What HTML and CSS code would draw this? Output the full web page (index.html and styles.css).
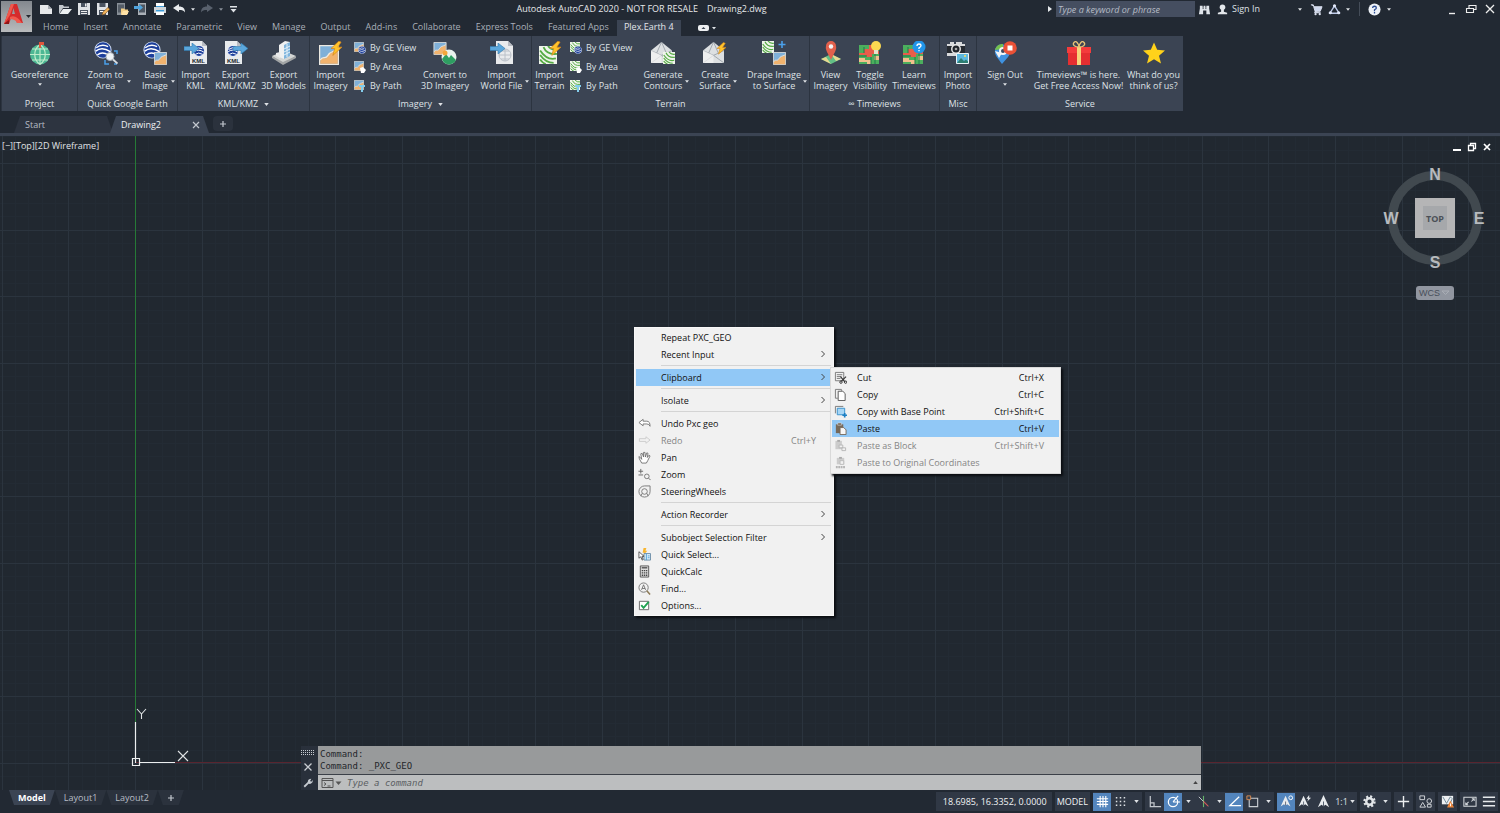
FILE: index.html
```html
<!DOCTYPE html>
<html lang="en">
<head>
<meta charset="utf-8">
<title>Autodesk AutoCAD 2020</title>
<link rel="stylesheet" href="styles.css">
</head>
<body>
<svg class="defs" aria-hidden="true">
  <defs>
    <linearGradient id="logoBg" x1="0" y1="0" x2="0" y2="1"><stop offset="0" stop-color="#83888e"/><stop offset="1" stop-color="#b9bbbd"/></linearGradient>
    <symbol id="caret" viewBox="0 0 6 4"><path d="M0 0h6L3 4z" fill="currentColor"/></symbol>
    <symbol id="chev" viewBox="0 0 6 8"><path d="M1.500 1l3 3-3 3" fill="none" stroke="#444"/></symbol>
    <symbol id="earth" viewBox="0 0 16 16"><circle cx="8" cy="8" r="7.600" fill="#dce8fa"/><circle cx="8" cy="8" r="6.800" fill="#1d3f9b"/><path d="M2 6Q7 2 12.500 5M1.500 9Q7 4.500 14.500 9.500M3 12.500Q7 9 13 12.500" fill="none" stroke="#fff" stroke-width="1.300"/></symbol>
    <symbol id="picture" viewBox="0 0 16 16"><path d="M.5.5h15v15H.500z" fill="#7fb0d8" stroke="#ece9e2"/><path d="M1 12.500c2-4 4 0 6-3.500s4-3 8-5V15H1z" fill="#f1b36e"/><path d="M1 12c2-4 4 0 6-3.500s4-3 8-5" fill="none" stroke="#f6ead9"/></symbol>
    <symbol id="terrain" viewBox="0 0 16 16"><path d="M0 0h16v16H0z" fill="#f0f5ec"/><path d="M1 4q6 9 14 7M1 8q5 7 12 7M1 12q2 3 5 4M4 1q3 7 12 6M8 0q3 4 8 3" fill="none" stroke="#55ab44" stroke-width="1.600"/></symbol>
    <symbol id="bolt" viewBox="0 0 12 16"><path d="M8.500 0L0 8h4L2 15.500 12 6.500H7.500L11 1z" fill="#ffc32b" stroke="#d6861c" stroke-width=".8"/></symbol>
    <symbol id="page" viewBox="0 0 17 23"><path d="M0 0h12l5 5v18H0z" fill="#e9ebed"/><path d="M12 0v5h5z" fill="#b8bcc3"/></symbol>
    <symbol id="arrow" viewBox="0 0 15 11"><path d="M0 3.500h8V0l7 5.500L8 11V7.500H0z" fill="#5ba7dc" stroke="#2f78ad" stroke-width=".6"/></symbol>
    <symbol id="map" viewBox="0 0 20 19"><path d="M0 0h20v19H0z" fill="#4caf5d"/><path d="M0 8h5V4h5V0h5v6h5v3h-7v3H7v-2H0z" fill="#e85d4a"/><path d="M0 13h6v2h6v4H8v-2H0zM15 11h5v4h-5z" fill="#f2c08c"/><path d="M5 2v6M12 12v7M0 11h8M16 0v19" stroke="#1f7b4a" fill="none"/></symbol>
    <symbol id="envelope" viewBox="0 0 22 22"><path d="M0 9L11 0l11 9v13H0z" fill="#dde0e2"/><path d="M0 9l11 5L22 9M0 22l11-8 11 8M11 0L6 11.500M11 0l5 11.500" fill="none" stroke="#8f979f" stroke-width=".8"/><path d="M0 9l11 5v8H0z" fill="#f5f5f5" opacity=".7"/></symbol>
    <symbol id="annoA" viewBox="0 0 16 16"><path d="M8 1l6 13-4-2.500L8 13l-2-1.500L2 14z" fill="#e8ebee"/><path d="M8 8v5" stroke="#4c5768"/></symbol>
    <symbol id="clip" viewBox="0 0 14 14"><path d="M2 2.500h8v9.500H2z" fill="currentColor"/><path d="M4 1h4v2.500H4z" fill="currentColor" stroke="#eee" stroke-width=".5"/><path d="M6.500 6h4l2.500 2.500V13.500H6.500z" fill="#f7f7f7" stroke="currentColor"/></symbol>
  </defs>
</svg>

<header class="titlebar">
  <button class="app-btn" aria-label="Application menu">
    <svg viewBox="0 0 31 31"><path d="M0 0h31v31H0z" fill="url(#logoBg)"/><path d="M3 23L10 3h6l6 19h-6l-1.500-5H10l-2 6zM11 13h3l-1.600-6z" fill="#d52b2c"/><path d="M3 23l7-20h3L9 14zM9 16c4-2 8 0 12 6h-5c-1-3-4-4-7-4z" fill="#f05a4e"/><path d="M3 23l5-4v4z" fill="#8c1516"/><path d="M25 14h5l-2.500 3z" fill="#24282e"/></svg>
  </button>
  <div class="head-rows">
    <div class="head-top">
      <nav class="quick" aria-label="Quick access">
        <button aria-label="New"><svg viewBox="0 0 14 14"><path d="M1 3h8l4 4v5H1z" fill="#e6e8ea"/><path d="M9 3v4h4z" fill="#a6abb2"/></svg></button>
        <button aria-label="Open"><svg viewBox="0 0 14 14"><path d="M1 12V3h4l1 1.500h5V6H5z" fill="#c3c8cd"/><path d="M5 7h9l-4 5H1.500z" fill="#eceff1"/></svg></button>
        <button aria-label="Save"><svg viewBox="0 0 14 14"><path d="M1 1h12v12H1z" fill="#dfe2e5"/><path d="M4 1h6v4H4zM3 8h8v5H3z" fill="#4a5360"/><path d="M8 1.500h1.500v3H8zM4 9h6v1H4zM4 11h6v1H4z" fill="#eee"/></svg></button>
        <button aria-label="Save as"><svg viewBox="0 0 14 14"><path d="M1 1h11v12H1z" fill="#dfe2e5"/><path d="M3.500 1h6v4h-6zM3 8h7v5H3z" fill="#4a5360"/><path d="M4 9h4v1H4z" fill="#fff"/><path d="M6 13l1-3 5-4.500 1.700 1.700L9 12z" fill="#f0b45c" stroke="#7a4a1b" stroke-width=".6"/></svg></button>
        <button aria-label="Open from web"><svg viewBox="0 0 14 14"><path d="M2 1h8v12H2z" fill="#888f97"/><path d="M3 2.500h6v8H3z" fill="#555d67"/><path d="M6 12V6.500h3l1 1h3V12z" fill="#f2cf87"/><path d="M8 9h6l-2 4H6z" fill="#ffe3a8"/></svg></button>
        <button aria-label="Save to web"><svg viewBox="0 0 14 14"><path d="M4 1h8v12H4z" fill="#aab0b7"/><path d="M5 2.500h6v8H5z" fill="#4e5762"/><path d="M0 4h5V2l4 3.500L5 9V7H0z" fill="#4fa3dc"/></svg></button>
        <button aria-label="Plot"><svg viewBox="0 0 14 14"><path d="M3 1h8v4H3z" fill="#fff"/><path d="M1 5h12v6H1z" fill="#cfd5da"/><path d="M3 8h8v5H3z" fill="#fff"/><path d="M3 8h8v1.500H3zM3 4h8v1H3z" fill="#3d9bd8"/></svg></button>
        <button aria-label="Undo"><svg viewBox="0 0 14 14"><path d="M1 6l6-4v2.500c4 0 6 2 6 6C12 8.500 10 8 7 8v2z" fill="#e9ecef"/></svg></button>
        <button class="thin" aria-label="Undo list"><svg class="caret"><use href="#caret"/></svg></button>
        <button aria-label="Redo"><svg viewBox="0 0 14 14"><path d="M13 6L7 2v2.500c-4 0-6 2-6 6C2 8.500 4 8 7 8v2z" fill="#59616d"/></svg></button>
        <button class="thin dim" aria-label="Redo list"><svg class="caret"><use href="#caret"/></svg></button>
        <button class="custom" aria-label="Customize"><svg viewBox="0 0 14 14"><path d="M4 4h7v1.500H4zM4.500 7h6l-3 3.500z" fill="#dfe3e7"/></svg></button>
      </nav>
      <h1 class="title">Autodesk AutoCAD 2020 - NOT FOR RESALE<span>Drawing2.dwg</span></h1>
      <div class="account">
        <svg class="tri" viewBox="0 0 4 6"><path d="M0 0l4 3-4 3z" fill="#e6e9ec"/></svg>
        <input class="search" type="text" placeholder="Type a keyword or phrase" aria-label="Search">
        <button aria-label="Find"><svg viewBox="0 0 14 14"><path d="M2 3h3v2h1V3h2v2h1V3h3v3l1 6H9V8H5.500v4H1l1-6z" fill="#dfe4ea"/><path d="M5 6h1M8 6h1" stroke="#222933"/></svg></button>
        <button class="sign"><svg viewBox="0 0 14 14"><circle cx="7" cy="4.500" r="3" fill="#e3e6ea"/><path d="M5.500 6h3v3.500l3.500 1V12H2v-1.500l3.500-1z" fill="#e3e6ea"/></svg>Sign In</button>
        <button class="thin" aria-label="Account list"><svg class="caret"><use href="#caret"/></svg></button>
        <button class="cart" aria-label="Store"><svg viewBox="0 0 14 14"><path d="M1 2h2.500l.8 2H13l-2 5H5.500L4 4M5.500 9L5 10.500h6.500" fill="#cfd8ee" stroke="#dfe4f3"/><circle cx="6" cy="12" r="1.200" fill="#dfe4f3"/><circle cx="10.500" cy="12" r="1.200" fill="#dfe4f3"/></svg></button>
        <button class="apps" aria-label="Autodesk apps"><svg viewBox="0 0 14 14"><path d="M7 3L2 11h10z" fill="none" stroke="#bfcbea" stroke-width="1.500"/><circle cx="7" cy="3" r="1.700" fill="#e0e7f8"/><circle cx="2.500" cy="10.500" r="1.700" fill="#e0e7f8"/><circle cx="11.500" cy="10.500" r="1.700" fill="#e0e7f8"/></svg></button>
        <button class="thin" aria-label="Apps list"><svg class="caret"><use href="#caret"/></svg></button>
        <i class="vr"></i>
        <button class="help" aria-label="Help"><svg viewBox="0 0 14 14"><circle cx="7" cy="7" r="6.500" fill="#eef2f8"/><path d="M5 5.500q0-2 2-2t2 1.800q0 1-2 2v1.500M7 9.800v1.400" fill="none" stroke="#2c4d92" stroke-width="1.400"/></svg></button>
        <button class="thin" aria-label="Help list"><svg class="caret"><use href="#caret"/></svg></button>
      </div>
      <div class="winctl">
        <button aria-label="Minimize"><svg viewBox="0 0 14 14"><path d="M4 11.500h6" stroke="#eee" stroke-width="1.400"/></svg></button>
        <button aria-label="Restore"><svg viewBox="0 0 14 14"><path d="M2.500 6.500h7v4h-7zM5 6.500v-3h7v4H9.500" fill="none" stroke="#eee" stroke-width="1.100"/></svg></button>
        <button aria-label="Close"><svg viewBox="0 0 14 14"><path d="M3 3l8 8M11 3l-8 8" stroke="#eee" stroke-width="1.300"/></svg></button>
      </div>
    </div>
    <nav class="tabs" aria-label="Ribbon tabs">
      <button>Home</button><button>Insert</button><button>Annotate</button><button>Parametric</button><button>View</button><button>Manage</button><button>Output</button><button>Add-ins</button><button>Collaborate</button><button>Express Tools</button><button>Featured Apps</button><button class="on">Plex.Earth 4</button>
      <button class="mini" aria-label="Minimize ribbon"><svg viewBox="0 0 20 8"><rect x="0" y="1" width="11" height="6" rx="2" fill="#eef0f2"/><path d="M3.500 5h4l-2-2z" fill="#39424f"/><path d="M14 3h4l-2 2.500z" fill="#dfe3e7"/></svg></button>
    </nav>
  </div>
</header>

<section class="ribbon" aria-label="Ribbon">
  <div class="panel p-project">
    <div class="tools">
      <button class="tool"><svg viewBox="0 0 24 24"><circle cx="12" cy="13.500" r="10" fill="#4db894"/><path d="M12 3.500v20M2 13.500h20M4 8h16M4 19h16M12 3.500c-7 5-7 15 0 20M12 3.500c7 5 7 15 0 20" fill="none" stroke="#bfeccb" stroke-width="1.200"/><path d="M11 1h5v3h-3v3h-2z" fill="#e0583c"/></svg>Georeference<svg class="caret below"><use href="#caret"/></svg></button>
    </div>
    <h2>Project</h2>
  </div>
  <div class="panel p-earth">
    <div class="tools">
      <button class="tool"><svg viewBox="0 0 24 24"><use href="#earth" x="0" y="0" width="18" height="18"/><path d="M20 10h3v3M11 19v4h4M20 23h3" fill="none" stroke="#4ba0ea" stroke-width="1.500"/><circle cx="16" cy="15.500" r="4" fill="#eef3f6" stroke="#a7afb6"/><path d="M19 18.500l4.500 4" stroke="#d9dde0" stroke-width="1.800"/></svg>Zoom to<br>Area<svg class="caret side"><use href="#caret"/></svg></button>
      <button class="tool"><svg viewBox="0 0 24 24"><use href="#earth" x="0" y="0" width="18" height="18"/><use href="#picture" x="11" y="11" width="13" height="13"/></svg>Basic<br>Image<svg class="caret side"><use href="#caret"/></svg></button>
    </div>
    <h2>Quick Google Earth</h2>
  </div>
  <div class="panel p-kml">
    <div class="tools">
      <button class="tool"><svg viewBox="0 0 24 24"><use href="#page" x="6" y="0" width="17" height="23"/><use href="#earth" x="9" y="4" width="12" height="12"/><use href="#arrow" x="0" y="2" width="15" height="11"/><text class="kml" x="14.500" y="22">KML</text></svg>Import<br>KML</button>
      <button class="tool"><svg viewBox="0 0 24 24"><use href="#page" x="1" y="0" width="17" height="23"/><use href="#earth" x="3" y="4" width="12" height="12"/><use href="#arrow" x="9" y="2" width="15" height="11"/><text class="kml" x="9.500" y="22">KML</text></svg>Export<br>KML/KMZ</button>
      <button class="tool"><svg viewBox="0 0 24 24"><path d="M0 15l12-5 12 5-13 8z" fill="#d4d6d4"/><path d="M0 15l11 6 13-6v2l-13 7L0 17z" fill="#a2a5a6"/><path d="M7 4l6-4 5 1v14l-6 3-5-2z" fill="#f0f1f1"/><path d="M12 4l6-3v14l-6 3z" fill="#7fb4dc"/><path d="M12 8l6-3M12 11l6-3M12 14l6-3M15 3v13" stroke="#e4f0f8"/><path d="M4 12l4-1v6l-4-2z" fill="#e9eaea"/></svg>Export<br>3D Models</button>
    </div>
    <h2>KML/KMZ<svg class="caret"><use href="#caret"/></svg></h2>
  </div>
  <div class="panel p-imagery">
    <div class="tools">
      <button class="tool"><svg viewBox="0 0 24 24"><use href="#picture" x="0" y="4" width="20" height="20"/><use href="#bolt" x="12" y="0" width="11" height="15"/></svg>Import<br>Imagery</button>
      <div class="stack">
        <button><svg viewBox="0 0 12 12"><use href="#picture" width="10" height="10"/><use href="#earth" x="4" y="4" width="8" height="8"/></svg>By GE View</button>
        <button><svg viewBox="0 0 12 12"><use href="#picture" width="10" height="10"/><path d="M6 7l3-1 3 3-2 3H7z" fill="#fff"/></svg>By Area</button>
        <button><svg viewBox="0 0 12 12"><use href="#picture" width="10" height="10"/><path d="M5 5h6v2H9v5H7V7H5z" fill="#83cdec"/></svg>By Path</button>
      </div>
      <button class="tool"><svg viewBox="0 0 24 24"><use href="#picture" x="0" y="1" width="14" height="13"/><circle cx="16" cy="16" r="7.500" fill="#e9f2ee"/><path d="M9 18l4-5 3 4 2-3 5 5c-2 5-11 7-14-1z" fill="#2e9e62"/><circle cx="12" cy="12" r="2.500" fill="#f3a73c"/></svg>Convert to<br>3D Imagery</button>
      <button class="tool"><svg viewBox="0 0 24 24"><use href="#page" x="6" y="0" width="17" height="23"/><circle cx="15" cy="14" r="6" fill="none" stroke="#bac0c8"/><path d="M9 14h12M15 8v12M11 10h8M11 18h8" stroke="#bac0c8"/><use href="#arrow" x="0" y="2" width="15" height="11"/></svg>Import<br>World File<svg class="caret side"><use href="#caret"/></svg></button>
    </div>
    <h2>Imagery<svg class="caret"><use href="#caret"/></svg></h2>
  </div>
  <div class="panel p-terrain">
    <div class="tools">
      <button class="tool"><svg viewBox="0 0 24 24"><use href="#terrain" x="1" y="5" width="18" height="18"/><use href="#bolt" x="12" y="0" width="11" height="15"/></svg>Import<br>Terrain</button>
      <div class="stack">
        <button><svg viewBox="0 0 12 12"><use href="#terrain" width="10" height="10"/><use href="#earth" x="4" y="4" width="8" height="8"/></svg>By GE View</button>
        <button><svg viewBox="0 0 12 12"><use href="#terrain" width="10" height="10"/><path d="M6 7l3-1 3 3-2 3H7z" fill="#fff"/></svg>By Area</button>
        <button><svg viewBox="0 0 12 12"><use href="#terrain" width="10" height="10"/><path d="M5 5h6v2H9v5H7V7H5z" fill="#83cdec"/></svg>By Path</button>
      </div>
      <button class="tool"><svg viewBox="0 0 24 24"><use href="#envelope" x="0" y="1" width="21" height="21"/><use href="#terrain" x="12" y="11" width="12" height="12"/></svg>Generate<br>Contours<svg class="caret side"><use href="#caret"/></svg></button>
      <button class="tool"><svg viewBox="0 0 24 24"><use href="#envelope" x="0" y="1" width="21" height="21"/><use href="#bolt" x="14" y="1" width="9" height="13"/></svg>Create<br>Surface<svg class="caret side"><use href="#caret"/></svg></button>
      <button class="tool"><svg viewBox="0 0 24 24"><use href="#terrain" x="0" y="0" width="12" height="12"/><use href="#picture" x="11" y="11" width="13" height="13"/><path d="M20 0v7M16.500 3.500h7" stroke="#4ba0ea" stroke-width="1.600"/></svg>Drape Image<br>to Surface<svg class="caret side"><use href="#caret"/></svg></button>
    </div>
    <h2>Terrain</h2>
  </div>
  <div class="panel p-time">
    <div class="tools">
      <button class="tool"><svg viewBox="0 0 24 24"><path d="M2 18l10-5 10 5-10 5z" fill="#62c086"/><path d="M2 18l5-2 5 7zM12 13l5 7 5-2z" fill="#e7d890"/><path d="M12 19C9 12 6 9 7 5a5 5 0 0110 0c1 4-2 7-5 14z" fill="#e2604c"/><circle cx="12" cy="5.500" r="2.200" fill="#f5f5f5"/></svg>View<br>Imagery</button>
      <button class="tool"><svg viewBox="0 0 24 24"><use href="#map" x="1" y="4" width="20" height="19"/><circle cx="18" cy="5" r="5" fill="#fbd951"/><path d="M16 9h4v4h-4z" fill="#e8e2cb"/></svg>Toggle<br>Visibility</button>
      <button class="tool"><svg viewBox="0 0 24 24"><use href="#map" x="1" y="4" width="20" height="19"/><circle cx="17" cy="6" r="6.500" fill="#2195e9"/><path d="M15 5q0-2 2-2t2 1.800q0 1-2 2v1.200M17 9v1.300" fill="none" stroke="#fff" stroke-width="1.300"/></svg>Learn<br>Timeviews</button>
    </div>
    <h2>∞ Timeviews</h2>
  </div>
  <div class="panel p-misc">
    <div class="tools">
      <button class="tool"><svg viewBox="0 0 24 24"><path d="M1 3h3V1h4v2h2V1h6v2h3v12H1z" fill="#d9dadc"/><path d="M1 5h18v7H1z" fill="#262a30"/><circle cx="10" cy="8" r="5" fill="#e4e4e4"/><circle cx="10" cy="8" r="3.500" fill="#20242a"/><circle cx="10" cy="8" r="1.300" fill="#aaa"/><path d="M10.500 12.500h12v10h-12z" fill="#5db8df" stroke="#eaf3f6"/><path d="M11 22l4-5 3 3 2-1.500 2 2V22z" fill="#2d7e72"/><circle cx="19" cy="15" r="1" fill="#ffe05d"/></svg>Import<br>Photo</button>
    </div>
    <h2>Misc</h2>
  </div>
  <div class="panel p-service">
    <div class="tools">
      <button class="tool"><svg viewBox="0 0 24 24"><path d="M9 23C5 17 1 14 2 9c1-4 4-6 8-6l7 7c1 4-4 8-8 13z" fill="#3f92e0"/><path d="M2 9c1-4 4-6 8-6v5z" fill="#76c14b"/><path d="M2 10l4 7 3-5z" fill="#f2f4f6"/><circle cx="10" cy="10" r="4" fill="#f5f7f8"/><circle cx="10" cy="10" r="2" fill="#3d4a60"/><circle cx="17" cy="7" r="6.800" fill="#ea5136"/><path d="M14.500 4.500h5v5h-5z" fill="#fff"/></svg>Sign Out<svg class="caret below"><use href="#caret"/></svg></button>
      <button class="tool"><svg viewBox="0 0 24 24"><path d="M1 12h22v12H1z" fill="#e52f31"/><path d="M0 6h24v6H0z" fill="#f43c3c"/><path d="M10 6h4v18h-4z" fill="#f7d37b"/><path d="M12 6C8 6 5 4 7 1.500S12 3 12 6c0-3 3-7 5-4.500S16 6 12 6z" fill="none" stroke="#e9c576" stroke-width="1.300"/></svg>Timeviews™ is here.<br>Get Free Access Now!</button>
      <button class="tool"><svg viewBox="0 0 24 24"><path d="M12 1.500l3.200 7.300 7.800.7-6 5.200 2 7.800-7-4.200-7 4.200 2-7.800-6-5.200 7.800-.7z" fill="#ffd21a"/></svg>What do you<br>think of us?</button>
    </div>
    <h2>Service</h2>
  </div>
</section>

<nav class="docs" aria-label="Drawings">
  <div class="doc">Start</div>
  <div class="doc on"><span>Drawing2</span><button aria-label="Close drawing"><svg viewBox="0 0 8 8"><path d="M1 1l6 6M7 1L1 7" stroke="#c3c8cf" stroke-width="1.200"/></svg></button></div>
  <button class="add" aria-label="New drawing"><svg viewBox="0 0 8 8"><path d="M4 1v6M1 4h6" stroke="#c3c8cf" stroke-width="1.200"/></svg></button>
</nav>

<main class="canvas">
  <svg class="grid" aria-hidden="true">
    <defs>
      <pattern id="g" x="135" y="27" width="200" height="200" patternUnits="userSpaceOnUse">
        <path d="M13.500 0v200M27.500 0v200M40.500 0v200M53.500 0v200M80.500 0v200M93.500 0v200M107.500 0v200M120.500 0v200M147.500 0v200M160.500 0v200M173.500 0v200M187.500 0v200M0 13.500h200M0 27.500h200M0 40.500h200M0 53.500h200M0 80.500h200M0 93.500h200M0 107.500h200M0 120.500h200M0 147.500h200M0 160.500h200M0 173.500h200M0 187.500h200" stroke="#232b34" fill="none"/>
        <path d="M.5 0v200M67.500 0v200M133.500 0v200M0 .5h200M0 67.500h200M0 133.500h200" stroke="#2b343e" fill="none"/>
      </pattern>
    </defs>
    <rect width="100%" height="100%" fill="url(#g)"/>
  </svg>
  <i class="axis-y"></i><i class="axis-x"></i>
  <svg class="ucs" viewBox="0 0 60 62" aria-label="UCS icon"><path d="M4.500 56V15M9 55.500h35M1.500 51.500h7v7h-7z" fill="none" stroke="#eceeef" stroke-width="1.200"/><path d="M6 2l4.500 5L15 2M10.500 7v5M47 44l10 10M57 44L47 54" fill="none" stroke="#dfe2e4" stroke-width="1.100"/></svg>

  <div class="view-label">[−][Top][2D Wireframe]</div>
  <div class="view-ctl">
    <button aria-label="Minimize view"><svg viewBox="0 0 10 10"><path d="M1 8h8" stroke="#fff" stroke-width="2"/></svg></button>
    <button aria-label="Restore view"><svg viewBox="0 0 10 10"><path d="M1.500 3.500h5v5h-5zM3.500 3V1.500h5v5H7" fill="none" stroke="#fff" stroke-width="1.300"/></svg></button>
    <button aria-label="Close view"><svg viewBox="0 0 10 10"><path d="M2 2l6 6M8 2L2 8" stroke="#fff" stroke-width="1.700"/></svg></button>
  </div>
  <div class="cube">
    <svg viewBox="0 0 104 104">
      <circle cx="52" cy="52" r="42.500" fill="none" stroke="#41494f" stroke-width="9"/>
      <path d="M32 32h40v40H32z" fill="#b5b5b6"/><path d="M40 40h24v24H40z" fill="#a6a8ab"/>
      <text class="face" x="52" y="56">TOP</text>
      <text class="dir" x="52" y="14">N</text><text class="dir" x="52" y="102">S</text><text class="dir" x="8" y="58">W</text><text class="dir" x="96" y="58">E</text>
    </svg>
    <button class="wcs">WCS<svg viewBox="0 0 8 6"><path d="M0 1h7L3.500 4.500z" fill="none" stroke="#a9adb5"/></svg></button>
  </div>

  <div class="menu ctx" role="menu">
    <button>Repeat PXC_GEO</button>
    <button>Recent Input<svg class="chev"><use href="#chev"/></svg></button>
    <hr>
    <button class="hot">Clipboard<svg class="chev"><use href="#chev"/></svg></button>
    <hr>
    <button>Isolate<svg class="chev"><use href="#chev"/></svg></button>
    <hr>
    <button><svg class="ico" viewBox="0 0 14 14"><path d="M1 6L5.500 2.500v2h4q3.500 0 3.500 5.500-1-2.500-3.500-2.500h-4v2z" fill="#fff" stroke="#777"/></svg>Undo Pxc geo</button>
    <button class="off" disabled><svg class="ico" viewBox="0 0 14 14"><path d="M13 6.500L8.500 3v2H1.500v3h7v2z" fill="none" stroke="#ccc"/></svg>Redo<kbd>Ctrl+Y</kbd></button>
    <button><svg class="ico" viewBox="0 0 14 14"><path d="M4 13L1.500 8.500 1 6l1.500 1L4 9 3 3l1.500-.5L6 6.500V1.500h1.500l.5 5 1.500-4.500 1.300.5L10 7l2-2.500 1 .8-2.500 5L9 13z" fill="#fff" stroke="#666" stroke-width=".9"/></svg>Pan</button>
    <button><svg class="ico" viewBox="0 0 14 14"><path d="M3 1v5M.5 3.500h5M.5 7.500h5" stroke="#666" fill="none"/><circle cx="9.500" cy="9" r="2.500" fill="none" stroke="#777"/><path d="M11.500 11l2 2" stroke="#666"/></svg>Zoom</button>
    <button><svg class="ico" viewBox="0 0 14 14"><path d="M7 1h6v6a6 6 0 11-6-6z" fill="none" stroke="#777"/><circle cx="7" cy="7" r="3" fill="none" stroke="#777"/><path d="M4.500 9L3 12M9.500 9L11 12" stroke="#777"/></svg>SteeringWheels</button>
    <hr>
    <button>Action Recorder<svg class="chev"><use href="#chev"/></svg></button>
    <hr>
    <button>Subobject Selection Filter<svg class="chev"><use href="#chev"/></svg></button>
    <button><svg class="ico" viewBox="0 0 14 14"><path d="M6 0L5 5h2L5 9l5-6H8l1-3z" fill="#f9b52d"/><path d="M6.500 6h7v7h-7z" fill="#dbeefa" stroke="#6a8ba5"/><path d="M9 6v7M10.500 8.500h2M10.500 10.500h2" stroke="#4f9fd6"/><path d="M1 4v7l2-1.500L4.500 13l1-.5L4.300 9H6.500z" fill="#fff" stroke="#333" stroke-width=".8"/></svg>Quick Select...</button>
    <button><svg class="ico" viewBox="0 0 14 14"><path d="M2.500 1h9v12h-9z" fill="#ddd" stroke="#555"/><path d="M4 3h6" stroke="#555" stroke-width="1.500"/><path d="M4 6h6M4 8.500h6M4 11h6" stroke="#444" stroke-width="1.500" stroke-dasharray="1.500 .75"/></svg>QuickCalc</button>
    <button><svg class="ico" viewBox="0 0 14 14"><circle cx="6" cy="6" r="5" fill="none" stroke="#777"/><path d="M3.800 8.500L6 3l2.200 5.500M4.500 7h3" fill="none" stroke="#666" stroke-width=".9"/><path d="M9.500 9.500l3.500 4" stroke="#8d7a56" stroke-width="1.600"/></svg>Find...</button>
    <button><svg class="ico" viewBox="0 0 14 14"><path d="M1.500 2.500h10v9h-10z" fill="#fff" stroke="#666"/><path d="M3.500 6.500L6 9.500 11.500 3" fill="none" stroke="#20a352" stroke-width="2"/></svg>Options...</button>
  </div>

  <div class="menu sub" role="menu">
    <button><svg class="ico" viewBox="0 0 14 14"><path d="M1.500 1.500h9v9h-9zM3 4h6M3 6h5M3 8h4" fill="none" stroke="#777"/><path d="M7 6l5 6M13 6l-5 5" stroke="#333" stroke-width="1.200"/><circle cx="7.500" cy="12" r="1.300" fill="none" stroke="#333"/><circle cx="12.500" cy="12" r="1.300" fill="none" stroke="#333"/></svg>Cut<kbd>Ctrl+X</kbd></button>
    <button><svg class="ico" viewBox="0 0 14 14"><path d="M8 3V1.500H1.500V11H4" fill="none" stroke="#777"/><path d="M4.500 3.500h5L12 6v7.500H4.500z" fill="#fff" stroke="#555"/></svg>Copy<kbd>Ctrl+C</kbd></button>
    <button><svg class="ico" viewBox="0 0 14 14"><path d="M1.500 9V1.500H10" fill="none" stroke="#777"/><path d="M3.500 3.500h8v7h-8z" fill="#a8d6f5" stroke="#368fcb"/><path d="M11.500 8.500v5M9 11h5" stroke="#1b7fc4" stroke-width="1.800"/></svg>Copy with Base Point<kbd>Ctrl+Shift+C</kbd></button>
    <button class="hot"><svg class="ico paste"><use href="#clip"/></svg>Paste<kbd>Ctrl+V</kbd></button>
    <button class="off" disabled><svg class="ico" viewBox="0 0 14 14"><path d="M1.500 2h7v9h-7z" fill="#ccc"/><path d="M3.500 1h3v2h-3z" fill="#aaa"/><path d="M5.500 6.500h4v3h-4zM8.500 9.500h4v3h-4z" fill="#f1f1f1" stroke="#b5b5b5"/></svg>Paste as Block<kbd>Ctrl+Shift+V</kbd></button>
    <button class="off" disabled><svg class="ico" viewBox="0 0 14 14"><path d="M3 2h8v7H3z" fill="#ccc"/><path d="M5.500 1h3v2h-3z" fill="#aaa"/><path d="M6.500 5h4v4h-4z" fill="#f1f1f1" stroke="#bbb"/><path d="M2 12h10" stroke="#b5b5b5" stroke-width="2.500" stroke-dasharray="2 .6"/></svg>Paste to Original Coordinates</button>
  </div>

  <div class="cmd">
    <div class="cmd-side">
      <svg class="grip" viewBox="0 0 14 5"><path d="M0 .5h14M0 2.500h14M0 4.500h14" stroke="#c5cad0" stroke-dasharray="1 1"/></svg>
      <button aria-label="Close command line"><svg viewBox="0 0 10 10"><path d="M1.500 1.500l7 7M8.500 1.500l-7 7" stroke="#c9cdd2" stroke-width="1.300"/></svg></button>
      <button aria-label="Customize command line"><svg viewBox="0 0 12 12"><path d="M1.500 10.500l5-5" stroke="#c5cad0" stroke-width="2.200"/><path d="M6 6c-1-3 1-5 4-5L8.500 3.500 10 4.500 11.500 2.500c1 3-2 5-4.500 4.500z" fill="#c5cad0"/></svg></button>
    </div>
    <div class="cmd-main">
      <div class="history"><p>Command:</p><p>Command: _PXC_GEO</p></div>
      <div class="entry">
        <svg class="prompt" viewBox="0 0 20 10"><path d="M.5.5h11v9H.500zM.5 2.500h11M2.500 4.500l2 1.500-2 1.500M6 8h3" fill="none" stroke="#555"/><path d="M14 3.500h6l-3 3.500z" fill="#555"/></svg>
        <input type="text" placeholder="Type a command" aria-label="Command">
        <svg class="up" viewBox="0 0 6 4"><path d="M0 4h6L3 0z" fill="#444"/></svg>
      </div>
    </div>
  </div>
</main>

<footer class="status">
  <nav class="layouts" aria-label="Layouts">
    <button class="on">Model</button><button>Layout1</button><button>Layout2</button><button aria-label="New layout"><svg viewBox="0 0 8 8"><path d="M4 1v6M1 4h6" stroke="#c3c8cf" stroke-width="1.200"/></svg></button>
  </nav>
  <div class="tray">
    <span class="coords">18.6985, 16.3352, 0.0000</span>
    <button class="word">MODEL</button>
    <div class="set">
      <button class="lit" aria-label="Grid"><svg viewBox="0 0 16 16"><path d="M5.500 2v12M8.500 2v12M11.500 2v12M2 5h12M2 8h12M2 11h12" stroke="#fff" stroke-width="1.200"/></svg></button>
      <button aria-label="Snap"><svg viewBox="0 0 16 16"><path d="M3 4h11M3 8h11M3 12h11" stroke="#dde1e5" stroke-width="1.600" stroke-dasharray="1.600 2.600"/></svg></button>
      <button class="thin" aria-label="Snap list"><svg class="caret"><use href="#caret"/></svg></button>
    </div>
    <div class="set">
      <button aria-label="Ortho"><svg viewBox="0 0 16 16"><path d="M3.500 2v11.500H15M3.500 9.500h4v4" fill="none" stroke="#c3c8ce" stroke-width="1.300"/></svg></button>
      <button class="lit" aria-label="Polar"><svg viewBox="0 0 16 16"><circle cx="7.500" cy="8.500" r="5" fill="none" stroke="#fff" stroke-width="1.300"/><path d="M7.500 8.500L13 2M7.500 8.500H15" stroke="#fff" stroke-width="1.200"/></svg></button>
      <button class="thin" aria-label="Polar list"><svg class="caret"><use href="#caret"/></svg></button>
      <button aria-label="Isodraft"><svg viewBox="0 0 16 16"><path d="M8 2v12" stroke="#64b36c" stroke-width="1.200"/><path d="M3 3l10 10" stroke="#c9cdd2"/><path d="M8 8l5 5" stroke="#c95555" stroke-width="1.200"/></svg></button>
      <button class="thin" aria-label="Isodraft list"><svg class="caret"><use href="#caret"/></svg></button>
      <button class="lit" aria-label="Object snap tracking"><svg viewBox="0 0 16 16"><path d="M13 3L3 12.500h12" fill="none" stroke="#fff" stroke-width="1.300"/></svg></button>
      <button aria-label="Object snap"><svg viewBox="0 0 16 16"><path d="M4.500 4.500h9v9h-9z" fill="none" stroke="#c9cdd2" stroke-width="1.200"/><path d="M2 2h4v4H2z" fill="#39424f" stroke="#d78b52"/></svg></button>
      <button class="thin" aria-label="Object snap list"><svg class="caret"><use href="#caret"/></svg></button>
    </div>
    <div class="set">
      <button class="lit" aria-label="Annotation visibility"><svg viewBox="0 0 16 16"><use href="#annoA" width="14" height="16"/><circle cx="12.500" cy="4" r="2" fill="none" stroke="#fff"/></svg></button>
      <button aria-label="Auto scale"><svg viewBox="0 0 16 16"><use href="#annoA" width="14" height="16"/><path d="M13 1l-3 4h2l-1 3 4-4h-2z" fill="#e8ebee"/></svg></button>
      <button aria-label="Annotation scale"><svg viewBox="0 0 16 16"><use href="#annoA" width="16" height="16"/></svg></button>
      <button class="scale">1:1<svg class="caret"><use href="#caret"/></svg></button>
    </div>
    <div class="set">
      <button aria-label="Workspace"><svg viewBox="0 0 16 16"><circle cx="8" cy="8" r="5.400" fill="none" stroke="#e3e6e9" stroke-width="2.400" stroke-dasharray="2.200 2.040"/><circle cx="8" cy="8" r="3.500" fill="none" stroke="#e3e6e9" stroke-width="2.600"/></svg></button>
      <button class="thin" aria-label="Workspace list"><svg class="caret"><use href="#caret"/></svg></button>
    </div>
    <div class="set"><button aria-label="Annotation monitor"><svg viewBox="0 0 16 16"><path d="M8 2v12M2 8h12" stroke="#eceef0" stroke-width="1.500"/></svg></button></div>
    <div class="set"><button aria-label="Isolate objects"><svg viewBox="0 0 16 16"><path d="M2 2h5v4H2zM5 9l-3 5h6z" fill="none" stroke="#d5d9dd"/><circle cx="12" cy="7.500" r="2.500" fill="none" stroke="#d5d9dd"/><path d="M10 11h4v3h-4z" fill="none" stroke="#d5d9dd"/></svg></button></div>
    <div class="set"><button aria-label="Graphics performance"><svg viewBox="0 0 16 16"><path d="M2 2h12v9H2z" fill="#eef0f2"/><path d="M3 3l4 7 4-7 2 2-2 5" fill="none" stroke="#6d8898"/><path d="M11 7l4 7.500H7.500z" fill="#e8833a"/><path d="M11.200 10v3" stroke="#fff"/></svg></button></div>
    <div class="set">
      <button aria-label="Clean screen"><svg viewBox="0 0 16 16"><path d="M2 3.500h13v9.500H2zM4 11.500l3-3M13 5l-3 3M10.500 5H13v2.500M4 9v2.500h2.500" fill="none" stroke="#d5d9dd" stroke-width="1.100"/></svg></button>
      <button aria-label="Customization"><svg viewBox="0 0 16 16"><path d="M2 3.500h13M2 8h13M2 12.500h13" stroke="#e6e9ec" stroke-width="1.600"/></svg></button>
    </div>
  </div>
</footer>
</body>
</html>
```
FILE: styles.css
```css
* { box-sizing: border-box; }
body {
  margin: 0;
  min-height: 100vh;
  display: flex;
  flex-direction: column;
  background: #222933;
  color: #dfe2e6;
  font: 9px/12px "Open Sans", "Noto Sans", sans-serif;
}
button {
  margin: 0;
  padding: 0;
  border: 0;
  background: none;
  color: inherit;
  font: inherit;
}
input { border: 0; padding: 0; margin: 0; font: inherit; min-width: 0; }
svg { display: block; flex: none; }
h1, h2, p { margin: 0; font: inherit; }
.defs { position: absolute; width: 0; height: 0; }
.caret { width: 5px; height: 3px; }

/* title bar and ribbon tabs */
.titlebar { display: flex; height: 36px; }
.app-btn { width: 32px; height: 32px; padding: 0 0 0 1px; }
.app-btn svg { width: 31px; height: 31px; }
.head-rows { flex: 1; min-width: 0; display: flex; flex-direction: column; }
.head-top { display: flex; height: 18px; align-items: center; }
.quick { display: flex; align-items: center; width: 33%; padding-left: 4px; }
.quick button { width: 19px; display: flex; justify-content: center; }
.quick button.thin { width: 9px; }
.quick button.dim { color: #8b929c; }
.quick button.custom { width: 16px; }
.quick svg:not(.caret) { width: 14px; height: 14px; }
.quick .caret, .account .caret { width: 4px; height: 3px; }
.title { white-space: nowrap; color: #e6e8ea; }
.title span { margin-left: 9px; }
.account { flex: 1; display: flex; align-items: center; justify-content: flex-end; }
.account button { display: flex; align-items: center; justify-content: center; width: 18px; }
.account button.thin { width: 12px; }
.account button.cart { width: 20px; }
.account button.apps { width: 16px; }
.account button.sign { width: auto; gap: 3px; padding-left: 3px; margin-right: 34px; }
.account svg:not(.caret) { width: 13px; height: 13px; }
.account svg.tri { width: 4px; height: 6px; margin-right: 4px; }
.search { width: 139px; height: 16px; padding: 0 2px; background: #454e60; color: #dfe2e6; font-style: italic; }
.search::placeholder { color: #b6bcc6; opacity: 1; }
.vr { width: 1px; height: 14px; margin: 0 5px; background: #454d59; }
.winctl { display: flex; margin-left: 50px; gap: 5px; padding-right: 3px; }
.winctl svg { width: 14px; height: 14px; }
.tabs { display: flex; height: 16px; margin-top: auto; padding-left: 4px; color: #a9afb8; }
.tabs button { height: 16px; padding: 0 8px 2px 7px; white-space: nowrap; }
.tabs .on { padding: 0 7px 2px; background: #3b4453; color: #e3e6ea; }
.tabs .mini { padding: 0 17px; }
.tabs .mini svg { width: 20px; height: 8px; }

/* ribbon */
.ribbon { display: flex; align-items: stretch; padding-left: 1px; min-height: 75px; }
.panel { display: flex; flex-direction: column; background: #3b4453; border-left: 1px solid #2c3440; }
.tools { display: grid; padding-top: 5px; flex: 1; align-items: start; }
.p-project .tools { grid-template-columns: 75px; }
.p-earth .tools { grid-template-columns: 55px 44px; }
.p-kml .tools { grid-template-columns: 35px 45px 51px; }
.p-imagery .tools { grid-template-columns: 41px 67px 54px 59px; }
.p-terrain .tools { grid-template-columns: 35px 68px 56px 48px 70px; }
.p-time .tools { grid-template-columns: 41px 38px 50px; }
.p-misc .tools { grid-template-columns: 36px; }
.p-service .tools { grid-template-columns: 56px 91px 59px; }
.tool { position: relative; display: block; text-align: center; white-space: nowrap; line-height: 11px; }
.tool > svg:first-child { width: 24px; height: 24px; margin: 0 auto 4px; }
.tool .below { margin: 3px auto 0; width: 4px; }
.tool .side { position: absolute; right: 2px; bottom: 8px; width: 4px; }
.kml { font: bold 6px "Liberation Sans", sans-serif; text-anchor: middle; fill: #22262c; }
.stack { display: grid; gap: 7px; padding-top: 1px; }
.stack button { display: flex; align-items: center; gap: 4px; padding-left: 3px; white-space: nowrap; }
.stack svg { width: 12px; height: 12px; }
.panel h2 { display: flex; justify-content: center; align-items: center; gap: 6px; height: 14px; }

/* drawing tabs */
.docs { display: flex; height: 25px; padding: 5px 0 0 14px; border-bottom: 3px solid #3b4453; }
.doc { width: 99px; height: 17px; padding: 0 9px 0 11px; line-height: 17px; background: #2d3440; color: #b7bdc6; clip-path: polygon(6px 0, 93px 0, 99px 100%, 0 100%); }
.doc.on { display: flex; justify-content: space-between; align-items: center; margin-left: -3px; background: #3b4453; color: #eef0f2; }
.doc button svg { width: 8px; height: 8px; }
.add { width: 20px; height: 15px; margin-left: 4px; display: flex; align-items: center; justify-content: center; background: #2b323d; border-radius: 4px; }
.add svg { width: 8px; height: 8px; }

/* drawing area */
.canvas { position: relative; flex: 1; min-height: 560px; background: #212830; overflow: hidden; }
.grid { position: absolute; inset: 0; width: 100%; height: 100%; }
.axis-y { position: absolute; left: 135px; top: 0; bottom: 28px; width: 1px; background: #267a36; }
.axis-x { position: absolute; left: 135px; right: 0; bottom: 27px; height: 1px; background: #59252f; }
.ucs { position: absolute; left: 131px; bottom: 21px; width: 60px; height: 62px; }
.view-label { position: absolute; left: 2px; top: 4px; color: #e0e3e6; }
.view-ctl { position: absolute; right: 8px; top: 6px; display: flex; gap: 5px; }
.view-ctl svg { width: 10px; height: 10px; }
.cube { position: absolute; right: 13px; top: 30px; display: flex; flex-direction: column; align-items: center; }
.cube > svg { width: 104px; height: 104px; }
.dir { font: bold 16px "Liberation Sans", sans-serif; text-anchor: middle; fill: #b7babd; }
.face { font: bold 9px "Open Sans", sans-serif; text-anchor: middle; fill: #4b5057; }
.wcs { width: 38px; height: 14px; margin-top: 16px; padding: 0 4px 0 3px; display: flex; justify-content: space-between; align-items: center; border-radius: 3px; background: #9196a0; color: #474e59; font: 9px/12px "Liberation Sans", sans-serif; }
.wcs svg { width: 8px; height: 6px; }

/* menus */
.menu { position: absolute; display: flex; flex-direction: column; background: #f1f1f1; color: #111; border: 1px solid #f8f8f8; box-shadow: 2px 2px 2px #0b0e12; }
.menu button { position: relative; display: flex; align-items: center; height: 17px; padding: 0 15px 0 25px; white-space: nowrap; }
.menu hr { width: calc(100% - 25px); height: 1px; margin: 2px 0 3px auto; border: 0; background: #d4d4d4; }
.menu .hot { background: #91c8f6; }
.menu .off { color: #858585; }
.menu kbd { margin-left: auto; padding-left: 12px; font: inherit; }
.menu .chev { position: absolute; right: 5px; top: 4px; width: 6px; height: 8px; }
.menu .ico { position: absolute; left: 2px; top: 2px; width: 13px; height: 13px; color: #c4c4c4; }
.menu .paste { color: #76695a; }
.ctx { left: calc(50% - 116px); top: 191px; width: 200px; padding: 1px 2px 1px 1px; }
.sub { left: calc(50% + 80px); top: 231px; width: 231px; padding: 1px 1px 2px; border: 1px solid #d9d9d9; }

/* command line */
.cmd { position: absolute; left: 301px; right: 299px; bottom: 0; display: flex; color: #24272b; font: 9px/12px "DejaVu Sans Mono", monospace; }
.cmd-side { width: 17px; padding: 4px 3px 2px 0; display: flex; flex-direction: column; justify-content: space-between; align-items: center; background: #29303b; }
.grip { width: 14px; height: 5px; }
.cmd-side button svg { width: 10px; height: 10px; }
.cmd-main { flex: 1; min-width: 0; }
.history { padding: 2px; background: #989a9b; border-bottom: 1px solid #3b4048; }
.history p { line-height: 12px; }
.entry { display: flex; align-items: center; height: 15px; padding: 0 3px; gap: 5px; background: #bcbebf; }
.prompt { width: 21px; height: 10px; }
.entry input { flex: 1; height: 14px; background: none; font-style: italic; }
.entry input::placeholder { color: #5b5f63; opacity: 1; }
.up { width: 5px; height: 3px; }

/* status bar */
.status { display: flex; justify-content: space-between; height: 23px; background: #222933; }
.layouts { display: flex; align-items: flex-start; padding-left: 9px; }
.layouts button { height: 15px; padding: 0 9px; line-height: 15px; background: #2b323d; color: #b7bdc6; clip-path: polygon(0 0, 100% 0, calc(100% - 5px) 100%, 5px 100%); }
.layouts .on { background: #3b4453; color: #fff; font-weight: bold; }
.layouts svg { width: 8px; height: 8px; margin: 3px 0; }
.tray { display: flex; gap: 3px; padding-right: 2px; align-items: center; }
.tray > * { height: 19px; display: flex; align-items: center; background: #303845; }
.coords { padding: 0 5px 0 7px; color: #f0f2f4; }
.word { padding: 0 2px; color: #f0f2f4; }
.set button { display: flex; justify-content: center; align-items: center; width: 19px; height: 18px; }
.set button.thin { width: 12px; }
.set .lit { background: #5385bd; width: 18px; }
.set svg:not(.caret) { width: 15px; height: 15px; }
.set .scale { width: 24px; gap: 2px; }
```
